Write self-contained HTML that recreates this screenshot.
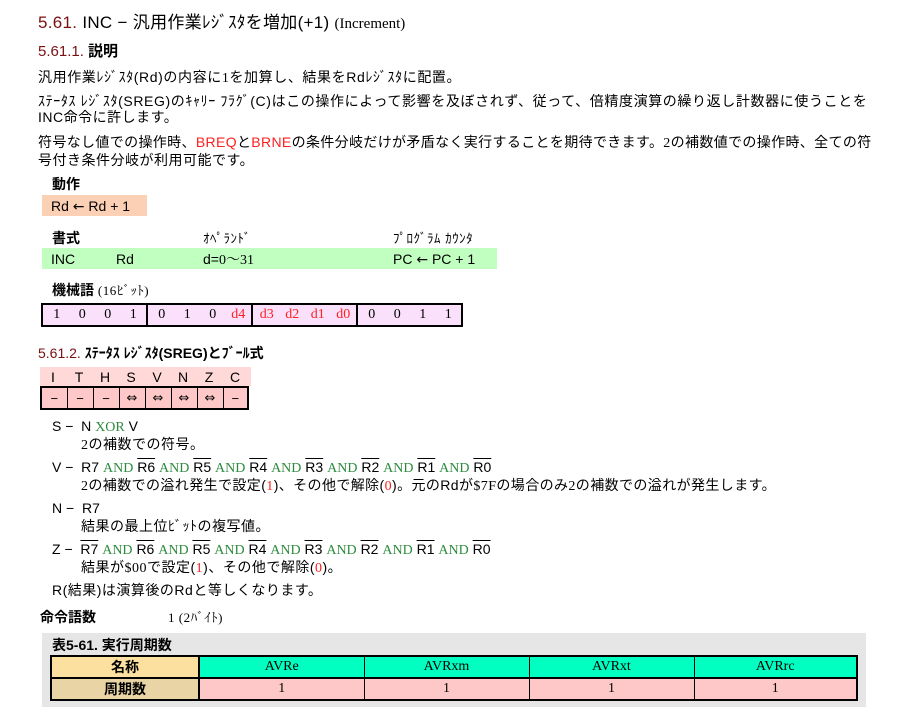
<!DOCTYPE html>
<html><head><meta charset="utf-8"><style>
*{margin:0;padding:0;box-sizing:border-box}
body{width:906px;height:722px;background:#fff;color:#000;font-family:"Liberation Sans","Noto Sans CJK JP",sans-serif;position:relative;overflow:hidden}
.a{position:absolute;white-space:nowrap;line-height:1}
.s{font-family:"Liberation Serif","Noto Serif CJK SC",serif}
.r{color:#ff2020}
.g{color:#2e8b3e}
.o{text-decoration:overline}
.h{color:#7a1010}
.d{font-family:"DejaVu Sans",sans-serif}
table{border-collapse:collapse;position:absolute}
.b td{white-space:nowrap;padding:0 0 0 1px}
.b span{display:inline-block;width:25.5px;text-align:center}
</style></head><body>
<div class="a" style="left:38px;top:14px;font-size:17px;letter-spacing:0.3px"><span class="h">5.61.</span> INC − 汎用作業ﾚｼﾞｽﾀを増加(+1) <span class="s" style="font-size:15px;letter-spacing:0">(Increment)</span></div>
<div class="a" style="left:38px;top:44px;font-size:15px;font-weight:bold"><span class="h" style="font-weight:normal">5.61.1.</span> 説明</div>
<div class="a" style="left:38px;top:70px;font-size:14px;letter-spacing:0.6px">汎用作業ﾚｼﾞｽﾀ(Rd)の内容に<span class="s">1</span>を加算し、結果をRdﾚｼﾞｽﾀに配置。</div>
<div class="a" style="left:38px;top:94px;font-size:14px;letter-spacing:0.62px">ｽﾃｰﾀｽ ﾚｼﾞｽﾀ(SREG)のｷｬﾘｰ ﾌﾗｸﾞ(C)はこの操作によって影響を及ぼされず、従って、倍精度演算の繰り返し計数器に使うことを</div>
<div class="a" style="left:38px;top:110px;font-size:14px;letter-spacing:0.5px">INC命令に許します。</div>
<div class="a" style="left:38px;top:135px;font-size:14px;letter-spacing:0.35px">符号なし値での操作時、<span class="r">BREQ</span>と<span class="r">BRNE</span>の条件分岐だけが矛盾なく実行することを期待できます。<span class="s">2</span>の補数値での操作時、全ての符</div>
<div class="a" style="left:38px;top:153px;font-size:14px;letter-spacing:0.5px">号付き条件分岐が利用可能です。</div>
<div class="a" style="left:52px;top:177px;font-size:14px;font-weight:bold">動作</div>
<div class="a" style="left:42px;top:195px;width:105px;height:21px;background:#fcd0b4;font-size:14px;padding:4px 0 0 9px">Rd <span class="d">←</span> Rd + 1</div>
<div class="a" style="left:52px;top:231px;font-size:14px;font-weight:bold">書式</div>
<div class="a" style="left:203px;top:232px;font-size:13px;letter-spacing:0.5px">ｵﾍﾟﾗﾝﾄﾞ</div>
<div class="a" style="left:393px;top:232px;font-size:13px;letter-spacing:0.5px">ﾌﾟﾛｸﾞﾗﾑ ｶｳﾝﾀ</div>
<div class="a" style="left:42px;top:248px;width:455px;height:21px;background:#c0ffc0"></div>
<div class="a" style="left:51px;top:252px;font-size:14px">INC</div>
<div class="a" style="left:116px;top:252px;font-size:14px">Rd</div>
<div class="a" style="left:203px;top:252px;font-size:14px">d=<span class="s">0～31</span></div>
<div class="a" style="left:393px;top:252px;font-size:14px">PC <span class="d">←</span> PC + 1</div>
<div class="a" style="left:52px;top:283px;font-size:14px;font-weight:bold">機械語 <span class="s" style="font-weight:normal;font-size:13px;letter-spacing:0.5px">(16ﾋﾞｯﾄ)</span></div>
<table class="b" style="left:41px;top:303px;border:2px solid #000;background:#fae0fa;font-family:'Liberation Serif',serif;font-size:14px">
<tr style="height:22px">
<td style="width:104px;border-right:2px solid #000"><span>1</span><span>0</span><span>0</span><span>1</span></td>
<td style="width:104px;border-right:2px solid #000"><span>0</span><span>1</span><span>0</span><span class="r">d4</span></td>
<td style="width:104px;border-right:2px solid #000" class="r"><span>d3</span><span>d2</span><span>d1</span><span>d0</span></td>
<td style="width:104px"><span>0</span><span>0</span><span>1</span><span>1</span></td></tr></table>
<div class="a" style="left:38px;top:346px;font-size:14px;font-weight:bold"><span class="h" style="font-weight:normal">5.61.2.</span> ｽﾃｰﾀｽ ﾚｼﾞｽﾀ(SREG)とﾌﾞｰﾙ式</div>
<div class="a" style="left:40px;top:367px;width:211px;height:19px;background:#ffd8d8"></div>
<table style="left:40px;top:367px;font-size:14px;text-align:center">
<tr style="height:19px"><td style="width:26px">I</td><td style="width:26px">T</td><td style="width:26px">H</td><td style="width:26px">S</td><td style="width:26px">V</td><td style="width:26px">N</td><td style="width:26px">Z</td><td style="width:26px">C</td></tr></table>
<table style="left:40px;top:386px;font-size:13px;text-align:center;background:#ffc8c8;border:2px solid #000">
<tr style="height:22px"><td style="width:26px;border-right:1px solid #000">−</td><td style="width:26px;border-right:1px solid #000">−</td><td style="width:26px;border-right:1px solid #000">−</td><td class="d" style="width:26px;border-right:1px solid #000">⇔</td><td class="d" style="width:26px;border-right:1px solid #000">⇔</td><td class="d" style="width:26px;border-right:1px solid #000">⇔</td><td class="d" style="width:26px;border-right:1px solid #000">⇔</td><td style="width:25px">−</td></tr></table>
<div class="a" style="left:52px;top:419px;font-size:14px">S − &nbsp;N <span class="g s">XOR</span> V</div>
<div class="a" style="left:81px;top:437px;font-size:14px;letter-spacing:0.5px"><span class="s">2</span>の補数での符号。</div>
<div class="a" style="left:52px;top:460px;font-size:14px">V − &nbsp;R7 <span class="g s">AND</span> <span class="o">R6</span> <span class="g s">AND</span> <span class="o">R5</span> <span class="g s">AND</span> <span class="o">R4</span> <span class="g s">AND</span> <span class="o">R3</span> <span class="g s">AND</span> <span class="o">R2</span> <span class="g s">AND</span> <span class="o">R1</span> <span class="g s">AND</span> <span class="o">R0</span></div>
<div class="a" style="left:81px;top:478px;font-size:14px;letter-spacing:0.4px"><span class="s">2</span>の補数での溢れ発生で設定(<span class="r s">1</span>)、その他で解除(<span class="r s">0</span>)。元のRdが<span class="s">$7F</span>の場合のみ<span class="s">2</span>の補数での溢れが発生します。</div>
<div class="a" style="left:52px;top:501px;font-size:14px">N − &nbsp;R7</div>
<div class="a" style="left:81px;top:519px;font-size:14px;letter-spacing:0.5px">結果の最上位ﾋﾞｯﾄの複写値。</div>
<div class="a" style="left:52px;top:542px;font-size:14px">Z − &nbsp;<span class="o">R7</span> <span class="g s">AND</span> <span class="o">R6</span> <span class="g s">AND</span> <span class="o">R5</span> <span class="g s">AND</span> <span class="o">R4</span> <span class="g s">AND</span> <span class="o">R3</span> <span class="g s">AND</span> <span class="o">R2</span> <span class="g s">AND</span> <span class="o">R1</span> <span class="g s">AND</span> <span class="o">R0</span></div>
<div class="a" style="left:81px;top:560px;font-size:14px;letter-spacing:0.5px">結果が<span class="s">$00</span>で設定(<span class="r s">1</span>)、その他で解除(<span class="r s">0</span>)。</div>
<div class="a" style="left:52px;top:583px;font-size:14px;letter-spacing:0.5px">R(結果)は演算後のRdと等しくなります。</div>
<div class="a" style="left:40px;top:610px;font-size:14px;font-weight:bold">命令語数</div>
<div class="a s" style="left:168px;top:611px;font-size:13px;letter-spacing:0.5px">1 (2ﾊﾞｲﾄ)</div>
<div class="a" style="left:42px;top:633px;width:824px;height:74px;background:#e6e6e6"></div>
<div class="a" style="left:52px;top:638px;font-size:14px;font-weight:bold">表5-61. 実行周期数</div>
<table style="left:50px;top:655px;border:2px solid #000;font-size:14px;text-align:center">
<tr style="height:21px"><td style="width:148px;background:#fce0a0;font-weight:bold;border-right:2px solid #000;border-bottom:2px solid #000">名称</td>
<td class="s" style="width:165px;background:#00ffc0;border-right:1px solid #000;border-bottom:2px solid #000">AVRe</td>
<td class="s" style="width:165px;background:#00ffc0;border-right:1px solid #000;border-bottom:2px solid #000">AVRxm</td>
<td class="s" style="width:165px;background:#00ffc0;border-right:1px solid #000;border-bottom:2px solid #000">AVRxt</td>
<td class="s" style="width:163px;background:#00ffc0;border-bottom:2px solid #000">AVRrc</td></tr>
<tr style="height:20px"><td style="background:#e8d4a4;font-weight:bold;border-right:2px solid #000">周期数</td>
<td class="s" style="background:#ffc8c8;border-right:1px solid #000">1</td>
<td class="s" style="background:#ffc8c8;border-right:1px solid #000">1</td>
<td class="s" style="background:#ffc8c8;border-right:1px solid #000">1</td>
<td class="s" style="background:#ffc8c8">1</td></tr></table>
</body></html>
